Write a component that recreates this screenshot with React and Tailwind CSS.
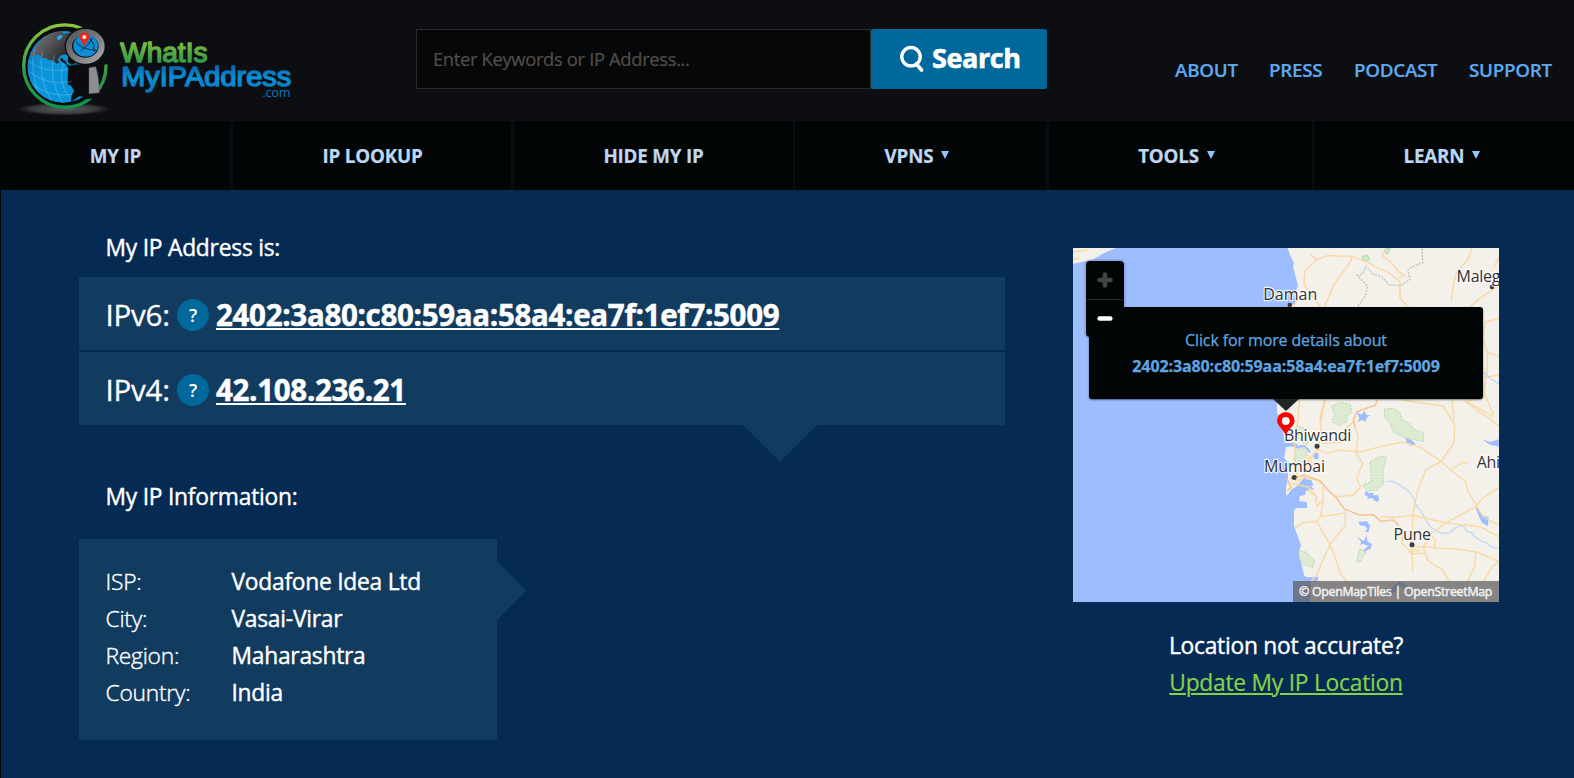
import React from "react";

const NAV = [
  { label: "MY IP", cell: "w-[233px] border-r-[3px] pl-px" },
  { label: "IP LOOKUP", cell: "w-[281px] border-r-[3px] pl-px" },
  { label: "HIDE MY IP", cell: "w-[281px] border-r-2" },
  { label: "VPNS", menu: true, cell: "w-[254px] border-r-[3px] pr-[7px]" },
  { label: "TOOLS", menu: true, cell: "w-[265px] border-r-2 pr-2" },
  { label: "LEARN", menu: true, cell: "w-[260px] pr-1" },
];

const INFO = [
  ["ISP:", "Vodafone Idea Ltd"],
  ["City:", "Vasai-Virar"],
  ["Region:", "Maharashtra"],
  ["Country:", "India"],
];

const ADDRESSES = [
  ["IPv6:", "2402:3a80:c80:59aa:58a4:ea7f:1ef7:5009"],
  ["IPv4:", "42.108.236.21"],
];

function Logo() {
  return (
    <svg className="block h-[121px] w-[320px]" viewBox="0 0 320 121" aria-label="WhatIsMyIPAddress.com">
      <defs>
        <linearGradient id="ring" x1="0" y1="0" x2="0" y2="1">
          <stop offset="0" stopColor="#8cc63f" />
          <stop offset="0.6" stopColor="#2f9a47" />
          <stop offset="1" stopColor="#0a9a4a" />
        </linearGradient>
        <linearGradient id="sea" x1="0" y1="0" x2="1" y2="0.3">
          <stop offset="0" stopColor="#1173bb" />
          <stop offset="0.35" stopColor="#0a97dc" />
          <stop offset="1" stopColor="#0a8fd6" />
        </linearGradient>
        <linearGradient id="land" x1="0" y1="0.2" x2="1" y2="0.8">
          <stop offset="0" stopColor="#777a7d" />
          <stop offset="0.4" stopColor="#55575a" />
          <stop offset="1" stopColor="#1b1c1e" />
        </linearGradient>
        <linearGradient id="metal" x1="0" y1="0" x2="1" y2="1">
          <stop offset="0" stopColor="#55575a" />
          <stop offset="0.5" stopColor="#77797c" />
          <stop offset="1" stopColor="#a6a8aa" />
        </linearGradient>
        <radialGradient id="shade">
          <stop offset="0" stopColor="#5a5b5f" />
          <stop offset="0.7" stopColor="#3a3b3f" />
          <stop offset="1" stopColor="#0d0e12" />
        </radialGradient>
        <linearGradient id="green" gradientUnits="userSpaceOnUse" x1="0" y1="41" x2="0" y2="64">
          <stop offset="0" stopColor="#80bd41" />
          <stop offset="1" stopColor="#2c9848" />
        </linearGradient>
        <linearGradient id="blue" gradientUnits="userSpaceOnUse" x1="0" y1="65" x2="0" y2="92">
          <stop offset="0" stopColor="#0a62ad" />
          <stop offset="0.5" stopColor="#0792d6" />
          <stop offset="1" stopColor="#0a70ba" />
        </linearGradient>
        <clipPath id="globe"><circle cx="145" cy="156" r="108" /></clipPath>
      </defs>
      <g transform="translate(15 15) scale(.33333)">
        <ellipse cx="147" cy="282" rx="138" ry="19" fill="url(#shade)" />
        <circle cx="149.5" cy="153" r="123.5" fill="#0a0b0e" stroke="url(#ring)" strokeWidth="10" />
        <path d="M206 30 L240 24 L290 80 L288 146 L262 150 L244 120 L200 60Z" fill="#0d0e12" />
        <path d="M218 226 L262 226 L250 250 L214 252Z" fill="#0d0e12" />
        <g clipPath="url(#globe)">
          <circle cx="145" cy="156" r="108" fill="url(#sea)" />
          <path d="M45 125 L62 95 L90 62 L128 45 L175 50 L165 110 L160 122 L148 118 L136 122 L128 134 L134 142 L126 146 L112 136 L102 136 L92 128 L80 130 L72 118Z" fill="url(#land)" />
          <path d="M126 66 l10 -7 8 3 -5 8 -8 6 -4 -4Z" fill="#2aa7e6" />
          <path d="M140 50 l24 -4 2 6 -18 5Z" fill="#0a97dc" />
          <path d="M152 146 L166 152 L184 148 L204 150 L226 144 L262 130 L262 240 L222 232 L208 246 L192 244 L168 262 L170 240 L178 228 L168 212 L158 208 L158 190 L160 160Z" fill="#0b0c0f" />
          <path d="M160 118 L176 132 L186 142 L170 150 L158 140Z" fill="#0b0c0f" />
          <path d="M134 132 l8 -4 4 8 6 2 4 10 -9 -3 -8 -6Z" fill="#1b1c1e" />
          <g fill="none" stroke="#7fd0f5" strokeWidth="1.6" opacity="0.75">
            <path d="M40 168 Q100 215 170 200" />
            <path d="M50 205 Q105 250 172 238" />
            <path d="M42 140 Q96 176 158 164" />
            <path d="M82 108 Q66 180 108 256" />
            <path d="M118 120 Q98 190 142 264" />
            <path d="M60 100 Q44 150 66 225" />
            <path d="M145 145 Q128 205 164 250" />
          </g>
        </g>
        <ellipse cx="211" cy="94" rx="62" ry="57" fill="#0d0e12" />
        <ellipse cx="211" cy="94" rx="49" ry="43" fill="#0d0e12" stroke="url(#metal)" strokeWidth="18" />
        <ellipse cx="212" cy="92" rx="37" ry="33" fill="#0a8fd6" />
        <path d="M182 78 Q196 104 244 106 M196 108 Q222 92 232 70 M226 70 Q240 88 238 110" fill="none" stroke="#0b1c30" strokeWidth="2.5" />
        <path d="M208 95 C203 82 194 77 194 66 A14.5 14.5 0 0 1 223 66 C223 77 212 83 208 95Z" fill="#e2281f" />
        <circle cx="208" cy="66" r="6" fill="#fbe9e4" />
        <path d="M222 158 L242 155 Q253 188 253 233 L222 236Z" fill="#8b8d90" stroke="#5c5e61" strokeWidth="1.5" />
      </g>
      <g fontFamily="'Liberation Sans', Arial, sans-serif">
        <text x="120.2" y="62.4" fontSize="27.6" textLength="87.3" lengthAdjust="spacingAndGlyphs" fill="url(#green)" stroke="url(#green)" strokeWidth="1.4" strokeLinejoin="round">WhatIs</text>
        <text x="121.2" y="85.6" fontSize="27" textLength="170" lengthAdjust="spacingAndGlyphs" fill="url(#blue)" stroke="url(#blue)" strokeWidth="1.4" strokeLinejoin="round">MyIPAddress</text>
      </g>
      <text x="262.4" y="96.6" fontSize="12.8" fontFamily="'Open Sans', sans-serif" textLength="28.2" fill="#1277bd">.com</text>
    </svg>
  );
}

function MapDrawing() {
  return (
    <svg className="block h-[354px] w-[426px]" viewBox="1073 248 426 354">
      <rect x="1073" y="248" width="426" height="354" fill="#9ebdff" />
      <path d="M1073 248 H1116 L1104 253 L1094 259 L1082 262 L1073 264Z" fill="#f4f1ea" />
      <path d="M1287.500 248 L1291 257 L1294 263 L1293 266 L1296 278 L1298 286 L1294 296 L1298 300 L1290 307 L1284 350 L1277 400 L1277 413 L1282 420 L1284 438 L1285 443 L1296 443 L1298 446 L1286 447 L1284 458 L1290 464 L1288 472 L1288 480 L1286 486 L1286 492 L1287 496 L1291 490 L1297 486 L1304 478 L1308 484 L1314 489 L1306 491 L1305 495 L1300 496 L1299 501 L1307 502 L1307 508 L1296 508 L1294 511 L1294 526 L1297 534 L1301 545 L1299 552 L1301 562 L1303 571 L1305 578 L1311 582 L1310 602 H1499 V248Z" fill="#f4f1ea" />
      <g transform="translate(1180 400) scale(.33333)">
        <path d="M612 28 L640 24 L662 40 L664 58 L690 72 L700 86 L730 98 L732 124 L706 120 L672 112 L640 96 L630 70 L614 52Z M455 20 L480 6 L512 14 L514 38 L498 48 L502 64 L480 76 L455 66 L464 44Z M570 186 L600 168 L620 172 L608 214 L612 250 L590 270 L562 274 L548 256 L574 244Z M345 150 L362 142 L382 150 L376 180 L352 200 L342 186Z M356 452 L378 456 L404 482 L400 502 L372 496 L358 476Z M538 448 L560 452 L540 486 L530 484Z M350 76 L370 84 L388 120 L378 138 L352 110Z" fill="#dfead3" stroke="#93d6a0" strokeWidth="2.500" strokeDasharray="5 4" />
        <g fill="#9ebdff">
          <path d="M530 36 l14 8 10 -12 4 12 12 2 -10 8 -4 12 -10 -6 -12 6 4 -12Z" />
          <path d="M676 114 L694 120 L708 132 L692 138 L680 128Z" />
          <path d="M556 272 L566 280 L580 278 L580 286 L594 286 L598 300 L590 306 L576 294 L560 296 L564 288 L554 286Z" />
          <path d="M536 366 L560 364 L570 376 L566 396 L554 396 L562 386 L556 378 L540 376Z" />
          <path d="M532 410 L552 424 L560 404 L562 424 L576 432 L572 446 L550 456 L556 444 L566 438 L550 432 L540 434 L544 426Z" />
          <path d="M906 118 L930 126 L956 118 V140 L930 134Z" />
          <path d="M886 322 L894 326 L904 344 L926 352 L924 378 L906 368 L898 352Z" />
          <path d="M372 232 L394 240 L400 256 L384 262 L370 256Z" />
          <path d="M366 524 L382 532 L416 530 L412 546 L376 544Z" />
          <path d="M620 574 L658 544 L700 566 L660 560 L630 590Z" />
          <path d="M398 160 L416 158 L414 178 L402 176Z" />
        </g>
        <path d="M312 134 C330 126 340 142 354 142 C370 132 384 144 390 158" fill="none" stroke="#9ebdff" strokeWidth="6" />
        <path d="M620 244 C650 240 664 262 678 268 C704 282 700 310 716 326 C736 342 730 366 760 388 C784 404 800 402 812 396 C828 380 836 376 848 378 C860 384 856 400 876 398 C880 416 900 414 906 426 C926 420 920 446 956 444" fill="none" stroke="#bcd8f4" strokeWidth="3.500" />
        <g fill="none" stroke="#f9d9a6" strokeWidth="4.400" strokeLinejoin="round">
          <path d="M358 0 L354 60 L344 110 L346 200" />
          <path d="M434 0 L420 50 L424 110 L412 150 L386 180 L372 226" />
          <path d="M412 148 L440 160 L480 150 L540 156 L600 140 L668 126 L720 142 L784 184 L812 210 L858 246 L862 270 L890 318 L910 350 L956 376" />
          <path d="M520 60 L534 110 L528 160 L548 190 L530 234 L542 262 L520 286 L470 290" />
          <path d="M424 130 L486 126 L494 88 L520 66" />
          <path d="M666 0 L790 18 L824 76 L822 128 L784 184 L738 208 L712 276 L698 346 L696 434 L698 516" />
          <path d="M850 0 L890 30 L956 76" />
          <path d="M812 210 L850 186 L864 190" />
          <path d="M956 262 L906 296 L884 322 L840 346 L796 370 L752 402 L730 440" />
          <path d="M698 346 L796 368 L850 374 L900 380 L956 410" />
          <path d="M698 346 L650 352 L600 350" />
          <path d="M700 440 L740 440 L766 444 L820 446 L890 456 L956 484" />
          <path d="M752 404 L764 416 L764 444" />
          <path d="M650 370 L668 400 L666 430 L696 462 L736 458" />
          <path d="M730 440 L744 482 L790 512 L806 544" />
          <path d="M888 458 L884 500 L862 544" />
          <path d="M956 484 L936 500 L910 546" />
          <path d="M346 382 L370 368 L410 364 L420 350 L492 340" />
          <path d="M410 364 L450 434 L472 490 L480 520 L504 548" />
          <path d="M496 330 L496 376 L450 434 L430 476 L412 522 L392 546" />
          <path d="M428 262 L430 300 L422 350 M430 300 L408 320 M376 236 L410 238 L428 252" />
          <path d="M334 250 L386 262 L410 290 L408 310 M400 200 L384 164" />
          <path d="M570 600 L610 570 L640 548" />
          <path d="M328 236 L346 232 L358 206 M356 248 L372 226" />
        </g>
        <g fill="none" stroke="#f6c493" strokeWidth="4.500" strokeLinejoin="round">
          <path d="M372 226 L420 242 L436 262 L468 292 L492 326 L540 346 L580 344 L602 364 L640 360 L656 376" />
          <path d="M592 0 L586 16 L562 24 L530 36 L520 60 L526 84" />
          <path d="M320 236 L334 262 L322 272 M334 236 L372 226" />
        </g>
        <g fill="none" stroke="#fbe0b4" strokeWidth="8" opacity="0.8">
          <path d="M344 244 L366 236 M380 180 L392 170 M690 450 L720 452 M386 268 L400 286" />
        </g>
      </g>
      <g transform="translate(1280 235) scale(.33333)">
        <path d="M246 64 l16 -4 6 14 -18 4Z M314 42 l16 -2 -4 14 -10 2Z" fill="#cfe8c8" stroke="#93d6a0" strokeWidth="2" />
        <g fill="none" stroke="#f9d9a6" strokeWidth="4.500" strokeLinejoin="round">
          <path d="M90 58 L110 74 L142 62 L212 64 L246 76 L262 80 L282 94 L320 110 L346 128 L360 142 V190 L384 216" />
          <path d="M316 44 L306 62 L330 78 L352 106 L372 122 L356 130" />
          <path d="M212 64 L214 76 L160 152 L148 182 L134 214" />
          <path d="M110 74 L74 110 L72 148 L90 174 L120 214" />
          <path d="M576 40 L562 76 L530 110 L520 148 L514 200" />
          <path d="M657 150 L600 190 L570 216" />
          <path d="M657 250 L616 262 L608 310 L622 350 L622 400 L612 470 L640 540" />
          <path d="M622 352 L657 364 M608 428 L657 420 M612 480 L560 500" />
          <path d="M516 495 L522 560 M560 500 L640 545" />
          <path d="M657 68 L640 98" />
          <path d="M56 190 L40 214 M136 495 L120 570" />
        </g>
        <path d="M610 410 L630 430 L657 446" fill="none" stroke="#b9d6f6" strokeWidth="4" />
        <path d="M426 40 L428 84 L408 90 L384 104 L390 134 L362 152 L328 150 L304 124 L280 118 L258 94 L248 116 L232 122 L262 152 L256 184 L232 214" fill="none" stroke="#bfbfbf" strokeWidth="4" strokeDasharray="6 4" />
      </g>
      <path d="M1073 252 L1087 250 M1073 260 L1079 258" stroke="#f9d9a6" strokeWidth="1.500" fill="none" />
      <g fill="#3d3d3d">
        <circle cx="1289.800" cy="305" r="2.300" />
        <circle cx="1492" cy="287" r="2.300" />
        <circle cx="1317" cy="446.200" r="2.500" />
        <circle cx="1294.200" cy="477.600" r="2.500" />
        <circle cx="1412" cy="544.800" r="2.500" />
      </g>
      <g fontFamily="'Open Sans', sans-serif" fontSize="16" fill="#333" stroke="#fff" strokeOpacity="0.8" strokeWidth="2.500" strokeLinejoin="round" paintOrder="stroke">
        <text x="1263.200" y="299.800" textLength="53.800">Daman</text>
        <text x="1456.500" y="281.500">Maleg</text>
        <text x="1284" y="441" textLength="67">Bhiwandi</text>
        <text x="1264" y="472.400" textLength="60.700">Mumbai</text>
        <text x="1393.500" y="540">Pune</text>
        <text x="1476.700" y="467.500">Ahi</text>
      </g>
      <path d="M1285.800 435.500 C1283.500 429 1277 426 1277 420.800 A8.800 8.800 0 0 1 1294.600 420.800 C1294.600 426 1288 429 1285.800 435.500Z" fill="#fe0000" />
      <circle cx="1285.800" cy="421" r="3.900" fill="#fff" />
    </svg>
  );
}

function MapCard() {
  return (
    <div className="relative h-[354px] w-[426px] overflow-hidden">
      <MapDrawing />
      <div className="absolute left-4 top-[59px] flex h-[92px] w-[394px] flex-col items-center rounded-[3px] bg-[#020506] pt-5 text-[16px] leading-[26px] tracking-[-0.12px] text-[#5fa6e0] shadow-[0_1px_2px_rgba(0,0,0,0.5)] [-webkit-text-stroke:0.25px_#5fa6e0]">
        <div>Click for more details about</div>
        <div className="font-bold">2402:3a80:c80:59aa:58a4:ea7f:1ef7:5009</div>
      </div>
      <svg className="absolute left-[200px] top-[151px] h-3 w-[26px]" viewBox="0 0 26 12">
        <path d="M0 0H26L13 12Z" fill="#212528" />
      </svg>
      <div className="absolute left-[13px] top-[13px] flex h-[76px] w-[38px] flex-col rounded bg-[#020506] shadow-[0_0_0_2px_rgba(0,0,0,0.1)]">
        <svg className="h-[38px] w-[38px]" viewBox="0 0 38 38">
          <path d="M13.500 19H24.500M19 13.500V24.500" stroke="#454547" strokeWidth="4.600" strokeLinecap="round" />
        </svg>
        <svg className="h-[38px] w-[38px] rounded-t border-t border-[#2b2d30]" viewBox="0 0 38 38">
          <path d="M13.500 19H24.500" stroke="#fff" strokeWidth="4.600" strokeLinecap="round" />
        </svg>
      </div>
      <div className="absolute bottom-0 right-0 h-[21px] w-[206px] whitespace-nowrap bg-[#575757]/70 pl-[6px] text-[12.3px] leading-[21px] tracking-[-0.25px] text-[#f0f0f0] [-webkit-text-stroke:0.5px_#f0f0f0]">
        © OpenMapTiles | OpenStreetMap
      </div>
    </div>
  );
}

export default function App() {
  return (
    <div className="h-[778px] w-[1574px] overflow-hidden bg-[#052b54] font-['Open_Sans',sans-serif] text-white">
      <header className="flex h-[121px] bg-[#0d0e12]">
        <div className="w-[416px]"><Logo /></div>
        <div className="mt-[29px] flex h-[60px] w-[631px]">
          <div className="flex w-[455px] items-center border border-[#2a2c2e] bg-[#060709] pl-4 text-[18.4px] tracking-[-0.35px] text-[#524e49] [-webkit-text-stroke:0.2px_#524e49]">
            Enter Keywords or IP Address...
          </div>
          <button className="flex w-44 items-center rounded-[2px] bg-[#00689b] pl-[29px]">
            <svg className="h-7 w-6" viewBox="0 0 24 28" fill="none" stroke="#fff" strokeWidth="3.400">
              <circle cx="11" cy="11.700" r="9.200" />
              <path d="M16.500 19L21.500 25" strokeLinecap="round" strokeWidth="3.600" />
            </svg>
            <span className="-mt-0.5 ml-2 text-[27px] font-bold leading-[30px] tracking-[-0.4px] [-webkit-text-stroke:0.6px_white]">Search</span>
          </button>
        </div>
        <nav className="ml-32 grid h-[140px] grid-cols-[94px_85px_115px_90px] items-center text-[18.8px] font-semibold tracking-[-0.28px] text-[#5eaaf0] [-webkit-text-stroke:0.2px_#5eaaf0]">
          <a>ABOUT</a>
          <a>PRESS</a>
          <a>PODCAST</a>
          <a>SUPPORT</a>
        </nav>
      </header>

      <nav className="flex h-[69px] bg-[#020506] text-[18.8px] font-bold tracking-[-0.2px] text-[#bfd7f2]">
        {NAV.map((n) => (
          <div key={n.label} className={`flex items-center justify-center border-[#0b0c0f] ${n.cell}`}>
            <span className="leading-7 [-webkit-text-stroke:0.2px_#bfd7f2]">{n.label}</span>
            {n.menu && (
              <svg className="mb-px ml-2 h-2 w-2" viewBox="0 0 8 8"><path d="M0 0H8L4 8Z" fill="#93c5fd" /></svg>
            )}
          </div>
        ))}
      </nav>

      <main className="flex h-[588px] border-l border-[#020506] pl-[78px]">
        <section className="w-[926px] pt-[39px]">
          <h2 className="pl-[26.500px] pt-px text-[22.8px] leading-[36px] tracking-[-0.23px] [-webkit-text-stroke:0.4px_white]">My IP Address is:</h2>
          <div className="relative mt-[11px] flex flex-col gap-0.5">
            {ADDRESSES.map(([label, value]) => (
              <div key={label} className="flex h-[73px] items-center bg-[#123b60] pl-[26.500px] text-[29.5px]">
                <span className="w-[71.500px] pt-[3px] tracking-[-0.2px] [-webkit-text-stroke:0.3px_white]">{label}</span>
                <span className="mt-[3px] flex h-8 w-8 items-center justify-center rounded-full bg-[#00689b] text-[18px] font-semibold">?</span>
                <a className="ml-[7px] pt-[3px] text-[29.5px] font-bold tracking-[-0.31px] underline decoration-2 underline-offset-[2px] [-webkit-text-stroke:0.5px_white] [text-decoration-skip-ink:none]">{value}</a>
              </div>
            ))}
            <svg className="absolute left-[664px] top-full h-[37px] w-[74px]" viewBox="0 0 74 37">
              <path d="M0 0H74L37 37Z" fill="#123b60" />
            </svg>
          </div>
          <h2 className="mt-[53px] pl-[26.500px] text-[22.8px] leading-[37px] tracking-[-0.23px] [-webkit-text-stroke:0.4px_white]">My IP Information:</h2>
          <div className="relative mt-[24px] h-[201px] w-[418px] bg-[#123b60] pl-[26.500px] pt-6 text-[22.8px] leading-[37px] tracking-[-0.25px]">
            {INFO.map(([label, value]) => (
              <div key={label} className="flex">
                <span className="w-[126px] font-light tracking-[-0.25px] [-webkit-text-stroke:0.4px_white]">{label}</span>
                <span className="[-webkit-text-stroke:0.4px_white]">{value}</span>
              </div>
            ))}
            <svg className="absolute left-full top-[22px] h-[59px] w-[29.5px]" viewBox="0 0 29.5 59">
              <path d="M0 0L29.500 29.500L0 59Z" fill="#123b60" />
            </svg>
          </div>
        </section>
        <aside className="ml-[68px] flex w-[426px] flex-col items-center pt-[58px] text-[22.8px] leading-[37px] tracking-[-0.25px]">
          <MapCard />
          <p className="mt-[25px] [-webkit-text-stroke:0.4px_white]">Location not accurate?</p>
          <a className="text-[#86d148] underline decoration-2 underline-offset-[2px] [-webkit-text-stroke:0.2px_#86d148]">Update My IP Location</a>
        </aside>
      </main>
    </div>
  );
}
